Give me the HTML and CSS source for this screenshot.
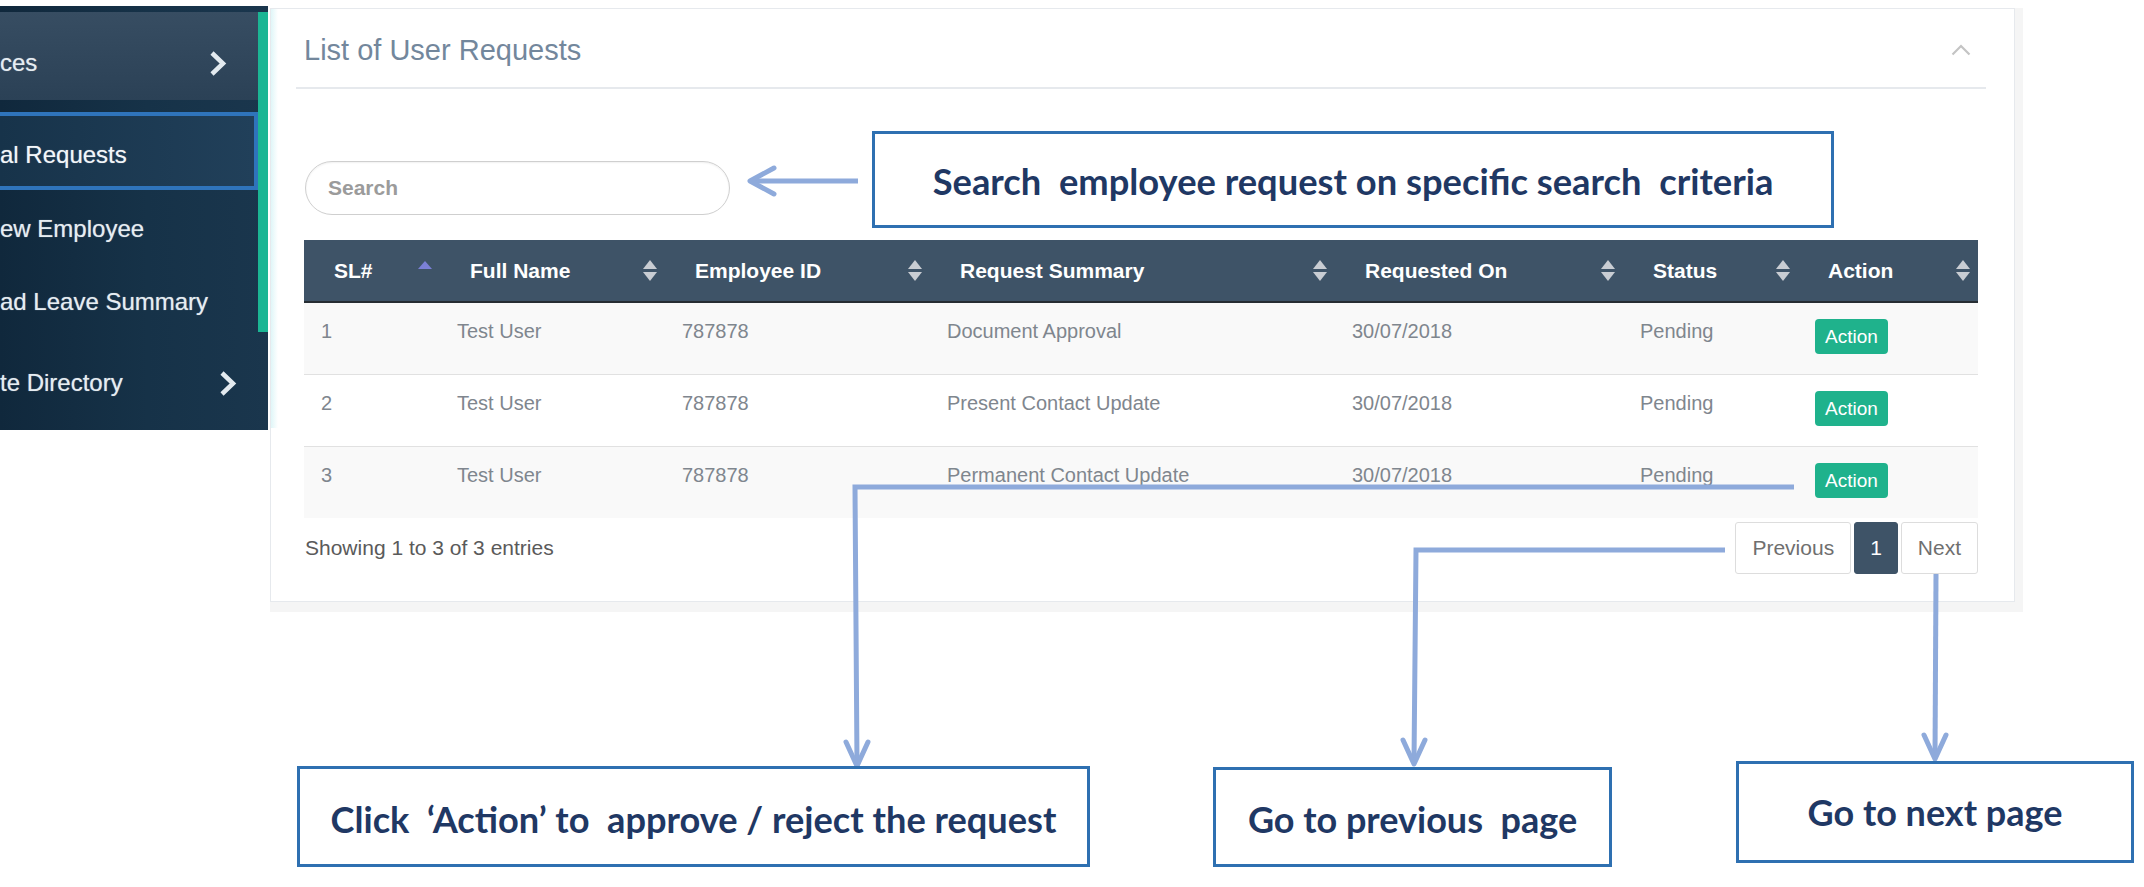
FILE: index.html
```html
<!DOCTYPE html>
<html lang="en">
<head>
<meta charset="utf-8">
<title>List of User Requests</title>
<link rel="stylesheet" href="styles.css">
</head>
<body>
<div class="slide">
  <div class="ui">
    <nav class="sidebar">
      <div class="menu-group">
        <div class="menu-head">
          <span>ces</span>
          <svg class="chev" width="19" height="27" viewBox="0 0 19 27"><path d="M4 3 L15 13.5 L4 24"/></svg>
        </div>
        <ul class="submenu">
          <li class="sub-item active">al Requests</li>
          <li class="sub-item">ew Employee</li>
          <li class="sub-item">ad Leave Summary</li>
        </ul>
      </div>
      <div class="menu-item">
        <span>te Directory</span>
        <svg class="chev" width="19" height="27" viewBox="0 0 19 27"><path d="M4 3 L15 13.5 L4 24"/></svg>
      </div>
    </nav>

    <div class="panel-wrap">
      <section class="card">
        <header class="card-head">
          <h2>List of User Requests</h2>
          <svg class="collapse" width="20" height="12" viewBox="0 0 20 12"><path d="M1.5 10.5 L10 2 L18.5 10.5"/></svg>
        </header>
        <div class="card-body">
          <input class="search" type="text" placeholder="Search">
          <table class="grid">
            <colgroup>
              <col class="c-sl"><col class="c-name"><col class="c-id"><col class="c-sum"><col class="c-on"><col class="c-st"><col class="c-act">
            </colgroup>
            <thead>
              <tr>
                <th><div class="th-in"><span>SL#</span><svg class="sort" width="14" height="23" viewBox="0 0 14 23"><path class="up on" d="M0 10 L7 2 L14 10 Z"/></svg></div></th>
                <th><div class="th-in"><span>Full Name</span><svg class="sort" width="14" height="23" viewBox="0 0 14 23"><path class="up" d="M0 10 L7 1 L14 10 Z"/><path class="dn" d="M0 13 L7 22 L14 13 Z"/></svg></div></th>
                <th><div class="th-in"><span>Employee ID</span><svg class="sort" width="14" height="23" viewBox="0 0 14 23"><path class="up" d="M0 10 L7 1 L14 10 Z"/><path class="dn" d="M0 13 L7 22 L14 13 Z"/></svg></div></th>
                <th><div class="th-in"><span>Request Summary</span><svg class="sort" width="14" height="23" viewBox="0 0 14 23"><path class="up" d="M0 10 L7 1 L14 10 Z"/><path class="dn" d="M0 13 L7 22 L14 13 Z"/></svg></div></th>
                <th><div class="th-in"><span>Requested On</span><svg class="sort" width="14" height="23" viewBox="0 0 14 23"><path class="up" d="M0 10 L7 1 L14 10 Z"/><path class="dn" d="M0 13 L7 22 L14 13 Z"/></svg></div></th>
                <th><div class="th-in"><span>Status</span><svg class="sort" width="14" height="23" viewBox="0 0 14 23"><path class="up" d="M0 10 L7 1 L14 10 Z"/><path class="dn" d="M0 13 L7 22 L14 13 Z"/></svg></div></th>
                <th><div class="th-in"><span>Action</span><svg class="sort" width="14" height="23" viewBox="0 0 14 23"><path class="up" d="M0 10 L7 1 L14 10 Z"/><path class="dn" d="M0 13 L7 22 L14 13 Z"/></svg></div></th>
              </tr>
            </thead>
            <tbody>
              <tr>
                <td>1</td><td>Test User</td><td>787878</td><td>Document Approval</td><td>30/07/2018</td><td>Pending</td><td><span class="btn-action">Action</span></td>
              </tr>
              <tr>
                <td>2</td><td>Test User</td><td>787878</td><td>Present Contact Update</td><td>30/07/2018</td><td>Pending</td><td><span class="btn-action">Action</span></td>
              </tr>
              <tr>
                <td>3</td><td>Test User</td><td>787878</td><td>Permanent Contact Update</td><td>30/07/2018</td><td>Pending</td><td><span class="btn-action">Action</span></td>
              </tr>
            </tbody>
          </table>
          <div class="foot">
            <p class="info">Showing 1 to 3 of 3 entries</p>
            <ul class="pager">
              <li>Previous</li>
              <li class="current">1</li>
              <li>Next</li>
            </ul>
          </div>
        </div>
      </section>
    </div>
  </div>

  <svg class="links" width="2144" height="887" viewBox="0 0 2144 887">
    <g class="link-lines">
      <path d="M858 181 H753"/>
      <path d="M1794 487 H855 L857 764"/>
      <path d="M1725 550 H1416 L1414 762"/>
      <path d="M1936 574 L1935 757"/>
    </g>
    <g class="link-heads">
      <path d="M774 168 L750 181 L774 194"/>
      <path d="M846 742 L857 766 L868 742"/>
      <path d="M1403 740 L1414 764 L1425 740"/>
      <path d="M1924 735 L1935 759 L1946 735"/>
    </g>
  </svg>

  <div class="note note-search">Search  employee request on specific search  criteria</div>
  <div class="note note-action">Click  ‘Action’ to  approve / reject the request</div>
  <div class="note note-prev">Go to previous  page</div>
  <div class="note note-next">Go to next page</div>
</div>
</body>
</html>
```

FILE: styles.css
```css
* { box-sizing: border-box; }

html, body {
  margin: 0;
  padding: 0;
  background: #fff;
}

body {
  font-family: "Liberation Sans", Arial, sans-serif;
}

.slide {
  position: relative;
  width: 2144px;
  height: 887px;
  overflow: hidden;
  background: #fff;
}

.ui {
  display: flex;
  align-items: flex-start;
}

/* ---------- sidebar ---------- */
.sidebar {
  width: 268px;
  height: 424px;
  margin-top: 6px;
  padding-top: 6px;
  background: linear-gradient(90deg, #10283c 0%, #163248 55%, #1a364d 100%);
  color: #e6edf2;
  font-size: 24px;
  line-height: 28px;
  white-space: nowrap;
  overflow: hidden;
  text-shadow: 0 0 1px rgba(230, 237, 242, 0.6);
}

.menu-group {
  border-right: 10px solid #1bb594;
}

.menu-head {
  display: flex;
  align-items: center;
  justify-content: space-between;
  height: 88px;
  padding: 14px 31px 0 0;
  background: linear-gradient(180deg, #374d62 0%, #2b4156 100%);
}

.submenu {
  list-style: none;
  margin: 0;
  padding: 12px 0 0;
}

.sub-item {
  padding: 25px 0 20px;
}

.sub-item.active {
  border: 4px solid #2f74bb;
  border-left: 0;
  padding: 25px 0 17px;
  background: linear-gradient(90deg, #17334a, #21405a);
  color: #f2f6f9;
}

.sub-item:last-child {
  padding-bottom: 16px;
}

.menu-item {
  display: flex;
  align-items: center;
  justify-content: space-between;
  padding: 37px 31px 33px 0;
}

.chev path {
  fill: none;
  stroke: #e3eaef;
  stroke-width: 4.5;
  stroke-linejoin: miter;
}

/* ---------- panel ---------- */
.panel-wrap {
  margin: 8px 0 0 2px;
  padding: 0 8px 10px 0;
  background: #f5f5f5;
}

.card {
  width: 1745px;
  border: 1px solid #e6e9ed;
  padding: 0 28px 27px 25px;
  background: linear-gradient(90deg, #e0f6f8, #ffffff) 0 0 / 7px 419px no-repeat, #fff;
}

.card-head {
  display: flex;
  align-items: center;
  justify-content: space-between;
  height: 80px;
  padding: 4px 15px 0 8px;
  border-bottom: 2px solid #e6e9ed;
}

.card-head h2 {
  margin: 0;
  font-size: 29px;
  font-weight: normal;
  line-height: 34px;
  color: #73879c;
}

.collapse path {
  fill: none;
  stroke: #c4c4c4;
  stroke-width: 2.2;
}

.card-body {
  padding: 72px 8px 0;
}

.search {
  display: block;
  width: 425px;
  height: 54px;
  margin: 0 0 25px 1px;
  padding: 0 22px;
  border: 1px solid #cfcfcf;
  border-radius: 27px;
  font-family: "Liberation Sans", Arial, sans-serif;
  font-size: 21px;
  font-weight: bold;
  color: #555;
  background: #fff;
  box-shadow: inset 0 1px 2px rgba(0, 0, 0, 0.06);
  outline: none;
}

.search::placeholder {
  color: #9b9b9b;
  font-weight: bold;
}

/* ---------- table ---------- */
.grid {
  width: 1674px;
  border-collapse: separate;
  border-spacing: 0;
  table-layout: fixed;
}

.c-sl { width: 136px; }
.c-name { width: 225px; }
.c-id { width: 265px; }
.c-sum { width: 405px; }
.c-on { width: 288px; }
.c-st { width: 175px; }
.c-act { width: 180px; }

.grid th {
  padding: 0;
  background: #3e5367;
  border-bottom: 2px solid #262d33;
  color: #fff;
  font-size: 21px;
  font-weight: bold;
  text-align: left;
}

.th-in {
  display: flex;
  align-items: center;
  justify-content: space-between;
  height: 61px;
  padding: 0 8px 0 30px;
}

.sort .up,
.sort .dn {
  fill: #c9cdd3;
}

.sort .up.on {
  fill: #7b80d6;
}

.grid td {
  padding: 16px 17px 20px;
  vertical-align: top;
  font-size: 20px;
  line-height: 24px;
  color: #7f868e;
  white-space: nowrap;
  background: #fff;
}

.grid tbody tr:nth-child(odd) td {
  background: #f9f9f9;
}

.grid tbody tr + tr td {
  border-top: 1px solid #e1e1e1;
}

.btn-action {
  display: inline-block;
  vertical-align: top;
  height: 35px;
  padding: 0 10px;
  line-height: 35px;
  border-radius: 4px;
  background: #1fb28c;
  color: #fff;
  font-size: 19px;
}

/* ---------- footer ---------- */
.foot {
  display: flex;
  align-items: center;
  justify-content: space-between;
  margin-top: 4px;
}

.info {
  margin: 0 0 0 1px;
  font-size: 21px;
  color: #5a5a5a;
}

.pager {
  display: flex;
  gap: 3px;
  list-style: none;
  margin: 0;
  padding: 0;
}

.pager li {
  height: 52px;
  padding: 0 16px;
  line-height: 50px;
  border: 1px solid #dddddd;
  border-radius: 3px;
  background: #fff;
  font-size: 21px;
  color: #6f6f6f;
}

.pager li.current {
  padding: 0 15px;
  background: #3e5367;
  border-color: #3e5367;
  color: #fff;
}

/* ---------- annotations ---------- */
.links {
  position: absolute;
  left: 0;
  top: 0;
  pointer-events: none;
}

.link-lines path,
.link-heads path {
  fill: none;
  stroke: #8eaadb;
  stroke-width: 5;
}

.link-heads path {
  stroke-linecap: round;
  stroke-linejoin: round;
}

.note {
  position: absolute;
  display: flex;
  align-items: center;
  justify-content: center;
  border: 3px solid #2e70b1;
  background: #fff;
  font-family: Lato, "Noto Sans", sans-serif;
  font-weight: bold;
  color: #1f3864;
  white-space: pre;
  line-height: 1.2;
}

.note-search {
  left: 872px;
  top: 131px;
  width: 962px;
  height: 97px;
  padding-top: 5px;
  font-size: 36.3px;
}

.note-action {
  left: 297px;
  top: 766px;
  width: 793px;
  height: 101px;
  padding-top: 7px;
  font-size: 36.2px;
}

.note-prev {
  left: 1213px;
  top: 767px;
  width: 399px;
  height: 100px;
  padding-top: 6px;
  font-size: 36px;
}

.note-next {
  left: 1736px;
  top: 761px;
  width: 398px;
  height: 102px;
  padding-top: 2px;
  font-size: 36px;
}
```
